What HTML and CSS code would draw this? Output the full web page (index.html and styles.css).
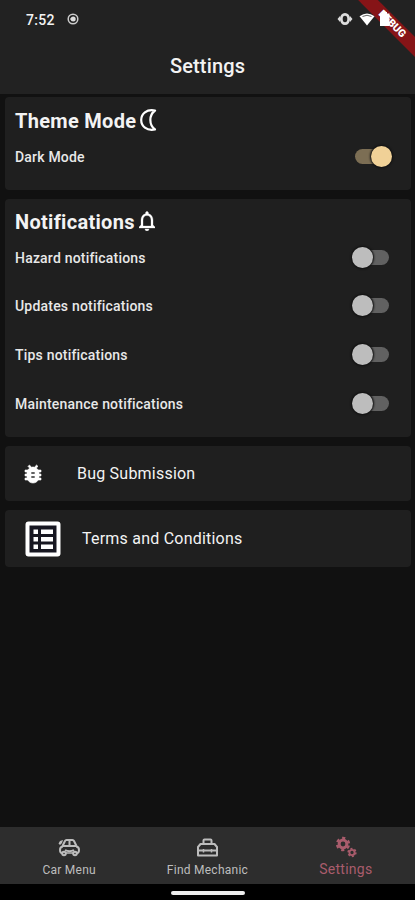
FILE: index.html
```html
<!DOCTYPE html>
<html lang="en">
  <head>
    <meta charset="UTF-8" />
    <meta name="viewport" content="width=device-width, initial-scale=1.0" />
    <title>Settings</title>
    <link rel="stylesheet" href="styles.css">
  </head>
  <body>
    <header class="app-header">
      <div class="status-bar">
        <span class="time">7:52</span>
        <svg class="status-dot" viewBox="0 0 12 12">
          <circle cx="6" cy="6" r="4.8" fill="none" stroke="#ccc" stroke-width="1.5" />
          <circle cx="6.2" cy="6" r="2.5" fill="#ddd" />
          <path d="M3 6h3" stroke="#ddd" />
        </svg>
        <div class="status-icons">
          <svg width="16" height="14" viewBox="0 0 16 14">
            <path d="M.5 7 3 4v6zM15.500 7 13 4v6z" fill="#ddd" />
            <ellipse cx="8" cy="7" rx="3.700" ry="4.700" fill="#222" stroke="#ddd" stroke-width="2.800" />
          </svg>
          <svg width="16" height="14" viewBox="0 0 16 14">
            <path d="M.5 4.300Q8-1.500 15.500 4.300L8 13.500z" fill="#fff" />
            <path d="M3.500 4.500Q8 2 12.500 4.500" fill="none" stroke="#666" stroke-width="1" />
          </svg>
          <svg width="12" height="16" viewBox="0 0 12 16">
            <path d="M1 2.500h2V1h5v1.500h2.500V15H1z" fill="#fff" />
          </svg>
        </div>
      </div>
      <h1>Settings</h1>
      <div class="ribbon">DEBUG</div>
    </header>

    <main>
      <section class="card theme">
        <h2>
          Theme Mode
          <svg class="moon" width="18" height="22" viewBox="0 0 18 22">
            <path d="M16 1.500C7.500-.2 2.200 5 2.200 11S7.500 22.200 16 20.500C9.800 15.800 9.800 6.200 16 1.500z" fill="none" stroke="#fff" stroke-width="2.200" stroke-linejoin="round" />
          </svg>
        </h2>
        <div class="row">
          <span>Dark Mode</span>
          <span class="switch on"></span>
        </div>
      </section>

      <section class="card notifications">
        <h2>
          Notifications
          <svg class="bell" width="16" height="20" viewBox="4 2 16 20">
            <path fill="#fff" stroke="#fff" stroke-width=".3" d="M12 22c1.100 0 2-.9 2-2h-4c0 1.100.9 2 2 2zm6-6v-5c0-3.070-1.630-5.640-4.500-6.320V4c0-.83-.67-1.500-1.500-1.500s-1.500.67-1.500 1.500v.68C7.640 5.360 6 7.920 6 11v5l-2 2v1h16v-1l-2-2zm-2 1H8v-6c0-2.480 1.510-4.500 4-4.500s4 2.020 4 4.500v6z" />
          </svg>
        </h2>
        <div class="row">
          <span>Hazard notifications</span>
          <span class="switch"></span>
        </div>
        <div class="row">
          <span>Updates notifications</span>
          <span class="switch"></span>
        </div>
        <div class="row">
          <span>Tips notifications</span>
          <span class="switch"></span>
        </div>
        <div class="row">
          <span>Maintenance notifications</span>
          <span class="switch"></span>
        </div>
      </section>

      <section class="card link bug">
        <svg width="24" height="24" viewBox="0 0 24 24">
          <path fill="#fff" stroke="#fff" stroke-width=".6" d="M20 8h-2.810c-.45-.78-1.070-1.450-1.820-1.960L17 4.410 15.590 3l-2.170 2.170C12.960 5.060 12.490 5 12 5s-.96.060-1.410.17L8.410 3 7 4.410l1.620 1.630C7.880 6.550 7.260 7.220 6.810 8H4v2h2.090c-.05.33-.09.66-.09 1v1H4v2h2v1c0 .34.040.67.090 1H4v2h2.810c1.040 1.790 2.970 3 5.190 3s4.150-1.210 5.190-3H20v-2h-2.090c.05-.33.090-.66.090-1v-1h2v-2h-2v-1c0-.34-.04-.67-.09-1H20V8zm-6 8h-4v-2h4v2zm0-4h-4v-2h4v2z" />
        </svg>
        <span>Bug Submission</span>
      </section>

      <section class="card link terms">
        <svg width="36" height="36" viewBox="0 0 36 36">
          <rect x="2.500" y="2.500" width="31" height="31" rx="1" fill="#171721" stroke="#fff" stroke-width="4" />
          <path fill="#fff" d="M8.500 8.500h4.500v4.500H8.500zM16 8.500h12v4.500H16zM8.500 16h4.500v4.500H8.500zM16 16h12v4.500H16zM8.500 23.500h4.500v4.500H8.500zM16 23.500h12v4.500H16z" />
        </svg>
        <span>Terms and Conditions</span>
      </section>
    </main>

    <nav class="bottom-nav">
      <div class="nav-item">
        <svg width="24" height="20" viewBox="0 0 24 20">
          <g fill="none" stroke="#bdbdbd" stroke-width="2" stroke-linejoin="round">
            <path d="M5.500 8 8 3q.4-1 1.500-1h6q1 0 1.500 1l2.500 5M12.500 2v6M5 8h14.500" />
            <path d="M6 8.500q-3 0-3 3.500t3 3M19 8.500q3 0 3 3.500t-3 3M8 12q4.500 2.500 9 0" />
            <circle cx="7" cy="15.500" r="1.800" />
            <circle cx="18" cy="15.500" r="1.800" />
            <path d="M9 15h7" stroke-width="1.500" />
          </g>
          <path d="M1.500 5.500 3 3l3-1-1 3-2 2z" fill="#bdbdbd" />
        </svg>
        <span>Car Menu</span>
      </div>
      <div class="nav-item">
        <svg width="24" height="20" viewBox="0 0 24 20">
          <g fill="none" stroke="#bdbdbd" stroke-width="2" stroke-linejoin="round">
            <path d="M8.500 6V2.500q0-1 1-1h6q1 0 1 1V6" />
            <path d="M5.500 6h14l2.500 3v8.500H3V9zM3 12.500h19" />
            <path d="M8.500 11v3.500M16.500 11v3.500" stroke-width="1.500" />
          </g>
        </svg>
        <span>Find Mechanic</span>
      </div>
      <div class="nav-item active">
        <svg width="24" height="22" viewBox="0 0 24 22">
          <g fill="none" stroke="#a95c6c">
            <circle cx="9" cy="8" r="3.900" stroke-width="3" />
            <circle cx="9" cy="8" r="6" stroke-width="2.400" stroke-dasharray="3.140 3.143" stroke-dashoffset="-1.570" />
            <circle cx="18" cy="16.500" r="2.600" stroke-width="1.900" />
            <circle cx="18" cy="16.500" r="3.900" stroke-width="1.500" stroke-dasharray="2.040 2.044" />
          </g>
        </svg>
        <span>Settings</span>
      </div>
    </nav>
    <div class="home-bar"></div>
  </body>
</html>
```

FILE: styles.css
```css
* {
  box-sizing: border-box;
}
body {
  margin: 0;
  height: 900px;
  display: flex;
  flex-direction: column;
  overflow: hidden;
  background-color: #111;
  color: #f3f3f3;
  font-family: Roboto, sans-serif;
}
h1,
h2 {
  margin: 0;
}
svg {
  display: block;
  flex-shrink: 0;
}
.app-header {
  position: relative;
  height: 94px;
  overflow: hidden;
  background-color: #222;
}
.status-bar {
  display: flex;
  align-items: center;
  height: 38px;
  padding-left: 26px;
  padding-right: 24px;
}
.time {
  width: 41px;
  padding-top: 1px;
  font-size: 14px;
  font-weight: 500;
  letter-spacing: 0.3px;
}
.status-dot {
  width: 12px;
  height: 12px;
}
.status-icons {
  position: relative;
  z-index: 1;
  display: flex;
  align-items: center;
  gap: 6px;
  margin-left: auto;
}
.status-icons svg:last-child {
  margin-left: -2px;
}
h1 {
  height: 56px;
  line-height: 57px;
  text-align: center;
  font-size: 20px;
  font-weight: 500;
  letter-spacing: 0.15px;
}
/* debug banner across the top right corner */
.ribbon {
  position: absolute;
  top: 16.5px;
  left: 341.5px;
  width: 100px;
  height: 14px;
  transform: rotate(45deg);
  background-color: #861417;
  color: #fff;
  text-align: center;
  font-size: 10.5px;
  line-height: 14px;
  font-weight: 900;
}
main {
  flex: 1;
  display: flex;
  flex-direction: column;
  gap: 9px;
  padding: 3px 4px 0 5px;
}
.card {
  border-radius: 4px;
  background-color: #1f1f1f;
}
.theme {
  height: 93px;
  padding: 9px 22px 0 10px;
}
.notifications {
  height: 238px;
  padding: 8px 22px 0 10px;
}
h2 {
  display: flex;
  align-items: center;
  height: 30px;
  font-size: 20px;
  font-weight: 700;
  letter-spacing: 0.3px;
}
.moon {
  margin: -2px 0 0 3px;
}
.bell {
  margin: -2px 0 0 4px;
}
.row {
  display: flex;
  align-items: center;
  justify-content: space-between;
  height: 48.6px;
  color: #e8e8e8;
  font-size: 14px;
  font-weight: 500;
  letter-spacing: 0.2px;
}
.row span:first-child {
  padding-top: 1px;
}
h2 + .row {
  margin-top: -4px;
}
.switch {
  position: relative;
  width: 34px;
  height: 15px;
  border-radius: 8px;
  background-color: #616161;
}
.switch::after {
  content: "";
  position: absolute;
  top: -3px;
  left: -3px;
  width: 21px;
  height: 21px;
  border-radius: 50%;
  background-color: #bdbdbd;
  box-shadow: 0 0 2px 1px #111;
}
.switch.on {
  background-color: #7c6e54;
}
.switch.on::after {
  left: 16px;
  background-color: #f0d197;
}
.link {
  display: flex;
  align-items: center;
  height: 55px;
  font-size: 16px;
  letter-spacing: 0.22px;
}
.bug {
  gap: 32px;
  padding-left: 16px;
}
.terms {
  height: 57px;
  gap: 21px;
  padding-left: 20px;
}
.bottom-nav {
  display: flex;
  height: 57px;
  background-color: #2d2d2d;
}
.nav-item {
  flex: 1;
  display: flex;
  flex-direction: column;
  align-items: center;
  padding-top: 11px;
  color: #bdbdbd;
  font-size: 12px;
  line-height: 14px;
  letter-spacing: 0.25px;
}
.nav-item svg {
  height: 20px;
  margin-bottom: 5px;
}
.active {
  padding-top: 9px;
  color: #a95c6c;
  font-size: 14px;
}
.nav-item.active svg {
  height: 22px;
  margin-bottom: 4px;
}
.home-bar {
  height: 16px;
  padding-top: 7px;
  background-color: #000;
}
.home-bar::before {
  content: "";
  display: block;
  width: 74px;
  height: 4px;
  margin: 0 auto;
  border-radius: 2px;
  background-color: #eee;
}
```
